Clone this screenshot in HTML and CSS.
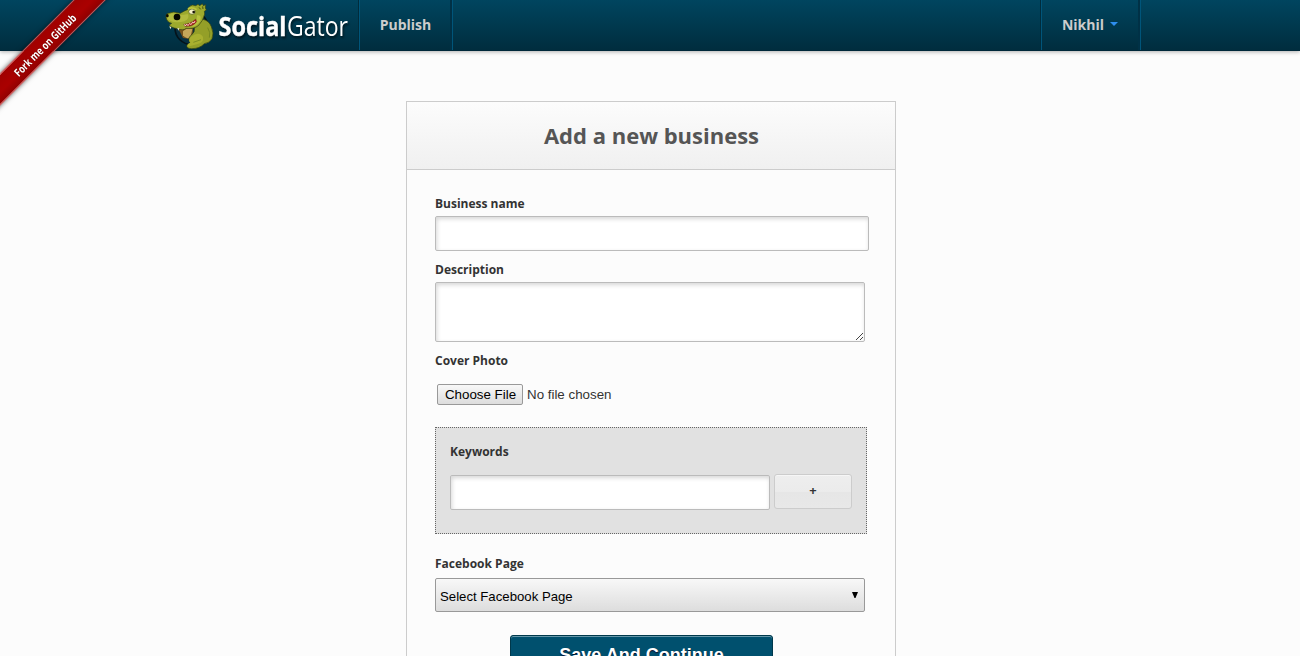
FILE: index.html
```html
<!DOCTYPE html>
<html lang="en">
<head>
<meta charset="utf-8">
<title>SocialGator - Add a new business</title>
<link rel="stylesheet" href="styles.css">
</head>
<body>
<a class="ribbon"><span>Fork me on GitHub</span></a>
<header class="navbar">
  <div class="nav-inner">
    <a class="brand">
      <svg class="gator" viewBox="30 0 150 153" width="50" height="51">
        <circle cx="110" cy="84" r="50" fill="#062f42" stroke="#04131a" stroke-width="5"/>
        <path d="M70 86 L96 76 L114 84 L112 118 L84 114 Z" fill="#78531c"/>
        <path d="M84 94 Q98 80 112 88 L106 112 Q94 120 84 106 Z" fill="#c6a75a"/>
        <path d="M122 72 Q128 48 144 58 Q162 62 169 80 Q178 100 171 116 Q164 129 148 131 Q134 146 110 146 Q93 146 96 135 L106 128 Q96 116 108 106 Q122 96 118 80 Z" fill="#949f28" stroke="#35420f" stroke-width="2"/>
        <path d="M108 110 Q132 92 144 111 Q148 128 125 133 L98 140 Q95 132 106 128 Q98 120 108 110 Z" fill="#a9b02f"/>
        <path d="M115 127 L138 119 M158 83 Q168 98 163 113" fill="none" stroke="#687b1e" stroke-width="2"/>
        <path d="M33 51 Q32 39 44 39 Q55 34 68 38 L76 40 Q88 32 97 29 Q104 15 113 15 L122 17 L129 13 L134 17 L142 11 L145 17 L152 14 L151 24 L154 30 L148 34 L149 42 Q144 63 131 76 Q117 88 94 85 Q84 93 67 86 Q45 82 43 75 L50 70 Q35 67 33 51 Z" fill="#9daa2d" stroke="#35410f" stroke-width="2"/>
        <path d="M42 44 Q56 36 67 44 Q80 47 98 42 Q106 55 88 64 Q54 72 37 56 Z" fill="#b2bb3e"/>
        <path d="M126 46 Q142 42 135 64 Q126 79 108 82 Q127 68 126 46 Z" fill="#b9c23f"/>
        <path d="M86 73 Q108 72 122 57 L125 65 Q114 80 90 79 Z" fill="#b31b22" stroke="#302008"/>
        <path d="M88 73 l3 5 4-6 4 5 5-7 4 4 5-8 4 3 3-6" fill="none" stroke="#f4f2d4" stroke-width="2.500"/>
        <path d="M43 79 l3 9 3-7 M67 84 l3 8 3-7" fill="#eeeacf"/>
        <ellipse cx="111" cy="35" rx="10" ry="8" fill="#f6f2c9" stroke="#46520f" stroke-width="2"/>
        <circle cx="116" cy="36" r="4" fill="#171406"/>
        <path d="M99 27 Q110 19 125 29" fill="none" stroke="#bdc640" stroke-width="5"/>
        <path d="M132 22 l5 6 M143 19 l1 8" stroke="#46520f" stroke-width="3"/>
        <ellipse cx="66" cy="51" rx="10" ry="10" fill="#070800"/>
        <ellipse cx="37" cy="47" rx="4" ry="5" fill="#070800"/>
      </svg>
      <svg class="wordmark" viewBox="0 0 136 51" width="136" height="51">
        <text class="word-bold" x="3.500" y="36" textLength="68" lengthAdjust="spacingAndGlyphs">Social</text>
        <text class="word-light" x="72" y="36" textLength="61" lengthAdjust="spacingAndGlyphs">Gator</text>
      </svg>
    </a>
    <nav class="nav-links"><a class="nav-item">Publish</a></nav>
    <a class="nav-item user">Nikhil<i class="caret"></i></a>
  </div>
</header>
<main class="card">
  <div class="card-head"><h1>Add a new business</h1></div>
  <form class="form">
    <label class="label" for="name">Business name</label>
    <input class="field name" id="name" type="text">
    <label class="label" for="desc">Description</label>
    <div class="area">
      <textarea class="field desc" id="desc"></textarea>
      <svg class="grip" width="8" height="8" viewBox="0 0 8 8" shape-rendering="crispEdges"><path d="M0 7h1v1H0zM1 6h1v1H1zM2 5h1v1H2zM3 4h1v1H3zM4 3h1v1H4zM5 2h1v1H5zM6 1h1v1H6zM4 7h1v1H4zM5 6h1v1H5zM6 5h1v1H6z" fill="#444"/></svg>
    </div>
    <span class="label">Cover Photo</span>
    <div class="file"><button class="file-btn" type="button">Choose File</button><span>No file chosen</span></div>
    <section class="keywords">
      <label class="label" for="kw">Keywords</label>
      <div class="kw-row"><input class="field kw" id="kw" type="text"><button class="plus" type="button">+</button></div>
    </section>
    <span class="label">Facebook Page</span>
    <div class="select"><span>Select Facebook Page</span><svg width="6" height="6" viewBox="0 0 6 6"><path d="M0 0h6L3.500 6h-1z"/></svg></div>
    <button class="save" type="button">Save And Continue</button>
  </form>
</main>
</body>
</html>
```
FILE: styles.css
```css
* { box-sizing: border-box; }
html { height: 100%; overflow: hidden; }
body { margin: 0; height: 656px; overflow: hidden; background: #fcfcfc; font-family: "Open Sans", sans-serif; color: #333; }
button, input, textarea { margin: 0; outline: 0; }

.navbar { height: 51px; background: linear-gradient(#00455f, #002d3e); border-bottom: 1px solid #00283a; box-shadow: 0 1px 4px rgba(0,0,0,.3); }
.nav-inner { display: flex; height: 50px; padding: 0 159px 0 165px; }
.brand { display: flex; width: 194px; height: 51px; }
.gator, .wordmark { display: block; flex: none; }
.wordmark { overflow: visible; filter: drop-shadow(1px 2px 1px rgba(0,0,0,.6)); }
.wordmark text { fill: #fff; font-family: "Open Sans", sans-serif; font-size: 27px; }
.wordmark .word-bold { font-weight: 700; stroke: #fff; stroke-width: .4px; }
.wordmark .word-light { font-weight: 400; }
.nav-links { display: flex; flex: 1; }
.nav-item { display: flex; align-items: center; justify-content: center; height: 50px; width: 94px; padding: 0 1px 2px 0; border: solid #00557a; border-width: 0 1px; box-shadow: -1px 0 #002c3c, inset -2px 0 #003146; color: #ccc; font-size: 14px; font-weight: 700; }
.user { width: 100px; padding-right: 2px; }
.caret { margin-left: 6px; border: 4px solid transparent; border-top-color: #2e8eee; border-bottom: 0; }

.ribbon { position: absolute; top: 33px; left: -55px; width: 200px; height: 23px; display: flex; align-items: center; justify-content: center; transform: rotate(-45deg); background: linear-gradient(#a00000, #aa0000 60%, #900000); border: solid #cf5555; border-width: 1px 0; box-shadow: 0 0 5px rgba(0,0,0,.6); color: #fff; font-size: 11px; font-weight: 700; }
.ribbon span { transform: scaleX(.8); white-space: nowrap; text-shadow: 0 0 2px rgba(0,0,0,.5); }

.card { width: 490px; height: 555px; overflow: hidden; margin: 50px 0 0 406px; border: 1px solid #ccc; border-bottom: 0; }
.card-head { display: flex; align-items: center; justify-content: center; height: 68px; background: linear-gradient(#fcfcfc, #f0f0f0); border-bottom: 1px solid #ccc; }
h1 { margin: 0; padding: 0 0 1px 1px; font-size: 22px; line-height: 30px; color: #555; }
.form { display: flex; flex-direction: column; align-items: flex-start; padding: 25px 28px 0; }
.label { display: block; font-size: 12px; font-weight: 700; line-height: 18px; }
.field { display: block; padding: 4px; background: #fff; border: 1px solid #bbb; border-radius: 2px; box-shadow: inset 1px 2px 4px rgba(0,0,0,.16); }
.name { width: 434px; height: 35px; margin: 3px 0 10px; }
.area { position: relative; margin: 3px 0 10px; }
.desc { width: 430px; height: 60px; resize: none; }
.grip { position: absolute; right: 1px; bottom: 2px; }
.file { display: flex; align-items: center; gap: 4px; height: 21px; margin: 14px 0 22px 2px; font: 13.333px "Liberation Sans", sans-serif; }
.file-btn { width: 86px; height: 21px; padding: 0 0 0 1px; border: 1px solid #999; border-radius: 2px; background: linear-gradient(#f8f8f8, #ddd); color: #000; font: inherit; }
.keywords { width: 432px; height: 107px; padding: 15px 14px 0; background: #e1e1e1; border: 1px dotted #666; }
.kw-row { display: flex; gap: 4px; margin-top: 13px; }
.kw { width: 320px; height: 35px; margin-top: 1px; }
.plus { width: 78px; height: 35px; padding: 0 0 4px; border: 1px solid #ccc; border-radius: 3px; background: linear-gradient(#eee, #ebebeb 52%, #e6e6e6 53%, #e8e8e8); box-shadow: inset 0 1px #f6f6f6; color: #333; font: 700 13px "Open Sans", sans-serif; }
.keywords + .label { margin-top: 21px; }
.select { display: flex; align-items: center; justify-content: space-between; width: 430px; height: 34px; margin: 5px 0 23px; padding: 3px 6px 0 4px; border: 1px solid #999; border-radius: 2px; background: linear-gradient(#f8f8f8, #ddd); color: #000; font: 13.2px "Liberation Sans", sans-serif; }
.select svg { margin-bottom: 4px; }
.save { width: 263px; height: 40px; margin-left: 75px; padding: 0; border: 1px solid #00384b; border-radius: 3px; background: #00506e; box-shadow: inset 0 1px #6698aa; color: #fff; font: 700 18px "Liberation Sans", sans-serif; text-shadow: 0 1px 1px #002; }
```
